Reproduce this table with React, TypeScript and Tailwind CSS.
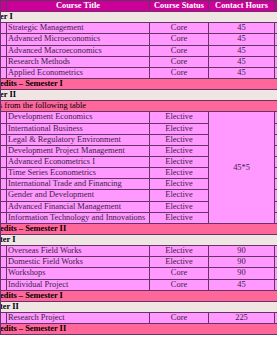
import React from "react";

// Course rows, grouped by semester
type Course = { title: string; status: string; hours?: string };

const sem1: Course[] = [
  { title: "Strategic Management", status: "Core", hours: "45" },
  { title: "Advanced Microeconomics", status: "Core", hours: "45" },
  { title: "Advanced  Macroeconomics", status: "Core", hours: "45" },
  { title: "Research Methods", status: "Core", hours: "45" },
  { title: "Applied Econometrics", status: "Core", hours: "45" },
];

const electives: string[] = [
  "Development Economics",
  "International Business",
  "Legal & Regulatory Environment",
  "Development Project Management",
  "Advanced Econometrics I",
  "Time Series Econometrics",
  "International Trade and Financing",
  "Gender and Development",
  "Advanced Financial Management",
  "Information Technology and Innovations",
];

const year2sem1: Course[] = [
  { title: "Overseas Field Works", status: "Elective", hours: "90" },
  { title: "Domestic Field Works", status: "Elective", hours: "90" },
  { title: "Workshops", status: "Core", hours: "90" },
  { title: "Individual Project", status: "Core", hours: "45" },
];

const cell = "border border-[#663366] h-[11.15px] p-0 leading-[10px]";

function LabelRow({ text, tone }: { text: string; tone: "sem" | "credit" }) {
  const bg = tone === "sem" ? "bg-[#efe6e4]" : "bg-[#ff6699]";
  return (
    <tr className={bg}>
      <td colSpan={5} className={`${cell} font-bold text-black whitespace-nowrap overflow-hidden`}>
        <span className="block -ml-[1px]">{text}</span>
      </td>
    </tr>
  );
}

function CourseRow({ c }: { c: Course }) {
  return (
    <tr className="bg-[#ff99ff] text-[#3b1f45]">
      <td className={cell}></td>
      <td className={`${cell} pl-[1px] whitespace-nowrap overflow-hidden`}>{c.title}</td>
      <td className={`${cell} text-center`}>{c.status}</td>
      <td className={`${cell} text-center`}>{c.hours}</td>
      <td className={cell}></td>
    </tr>
  );
}

export default function App() {
  return (
    <div className="w-[277px] h-[337px] overflow-hidden bg-white font-['Liberation_Serif',serif] text-[8.4px]">
      <table className="table-fixed border-collapse w-[280px]">
        <colgroup>
          <col className="w-[6px]" />
          <col className="w-[143px]" />
          <col className="w-[59px]" />
          <col className="w-[66px]" />
          <col className="w-[6px]" />
        </colgroup>
        <tbody>
          <tr className="bg-[#cc0099] text-white font-bold">
            <td className={cell}></td>
            <td className={`${cell} text-center`}>Course Title</td>
            <td className={`${cell} text-center`}>Course Status</td>
            <td className={`${cell} text-center`}>Contact Hours</td>
            <td className={cell}></td>
          </tr>
          <LabelRow text="er I" tone="sem" />
          {sem1.map((c) => (
            <CourseRow key={c.title} c={c} />
          ))}
          <LabelRow text="edits – Semester I" tone="credit" />
          <LabelRow text="er II" tone="sem" />
          <tr className="bg-[#ff6699]">
            <td colSpan={5} className={`${cell} text-black whitespace-nowrap overflow-hidden`}>
              <span className="block -ml-[2px]">s from the following table</span>
            </td>
          </tr>
          {electives.map((t, i) => (
            <tr key={t} className="bg-[#ff99ff] text-[#3b1f45]">
              <td className={cell}></td>
              <td className={`${cell} pl-[1px] whitespace-nowrap overflow-hidden`}>{t}</td>
              <td className={`${cell} text-center`}>Elective</td>
              {i === 0 && (
                <td rowSpan={10} className={`${cell} text-center align-middle`}>
                  45*5
                </td>
              )}
              <td className={cell}></td>
            </tr>
          ))}
          <LabelRow text="edits – Semester II" tone="credit" />
          <LabelRow text="ter I" tone="sem" />
          {year2sem1.map((c) => (
            <CourseRow key={c.title} c={c} />
          ))}
          <LabelRow text="edits – Semester I" tone="credit" />
          <LabelRow text="ter II" tone="sem" />
          <CourseRow c={{ title: "Research Project", status: "Core", hours: "225" }} />
          <LabelRow text="edits – Semester II" tone="credit" />
        </tbody>
      </table>
    </div>
  );
}
